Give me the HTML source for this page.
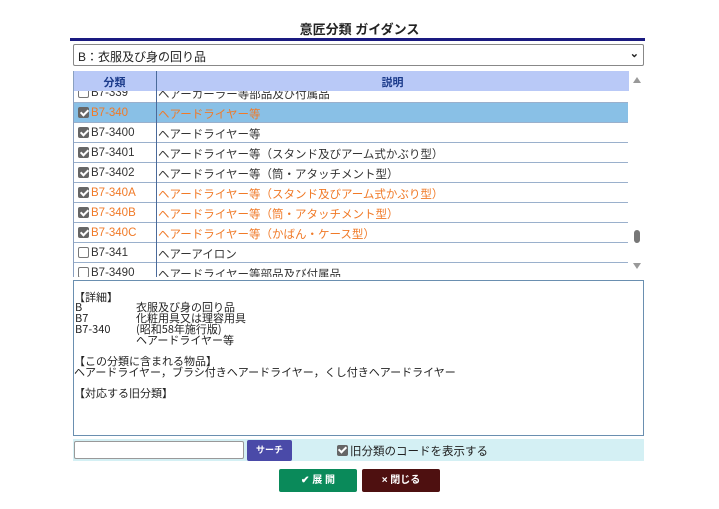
<!DOCTYPE html>
<html><head><meta charset="utf-8"><style>
*{box-sizing:border-box;margin:0;padding:0}
body{width:719px;height:509px;background:#fff;font-family:"Liberation Sans","Noto Sans CJK JP",sans-serif;position:relative;overflow:hidden;color:#333}
.a{position:absolute}
.title{left:0;width:719px;top:19px;text-align:center;font-size:13px;font-weight:bold;color:#222}
.line{left:70px;top:38px;width:575px;height:3px;background:#1a1a80}
.sel{left:73px;top:44px;width:571px;height:22px;border:1px solid #888;border-radius:2px;font-size:12px;padding:3px 4px;color:#222}
.sel span{position:absolute;right:4px;top:2px;font-size:11px;font-weight:bold}
.hdr{left:73px;top:71px;width:556px;height:20px;background:#b9c9f7;font-size:11px;font-weight:bold;color:#1a3a8a}
.hdr div{position:absolute;top:3px;text-align:center}
.vl{left:156px;top:71px;width:1px;height:206px;background:#4a6a9a}
.ll{left:73px;top:71px;width:1px;height:206px;background:#8aa0c0}
.row{position:absolute;left:0;width:554px;height:20px;border-bottom:1px solid #9ab0cc;font-size:11.5px;color:#333}
.row .c{position:absolute;left:4px;top:4px;width:11px;height:11px;border:1px solid #777;border-radius:2px;background:#fff}
.row .c.k{background:#666;border-color:#666}
.c.k:after{content:"";position:absolute;left:3px;top:0px;width:3px;height:6px;border:solid #fff;border-width:0 2px 2px 0;transform:rotate(45deg)}
.row .code{position:absolute;left:17px;top:4px}
.row .d{position:absolute;left:84px;top:3px}
.o{color:#f07a28}
.sb{left:630px;top:71px;width:14px;height:206px;background:#fff}
.ta{left:73px;top:280px;width:571px;height:156px;border:1px solid #6a8fb0;font-size:11px;color:#222;font-family:"Noto Sans CJK JP",sans-serif}
.ta div{position:absolute;white-space:nowrap;line-height:11px}
.bar{left:73px;top:439px;width:571px;height:22px;background:#d4f0f4}
.inp{left:74px;top:441px;width:170px;height:18px;border:1px solid #999;border-radius:2px;background:#fff}
.btn{left:247px;top:440px;width:45px;height:21px;background:#4a4aa8;border-radius:2px;color:#fff;font-size:9px;font-weight:bold;text-align:center;line-height:21px}
.chk{left:337px;top:443px;font-size:11.5px;color:#222}
.chk i{position:relative;display:inline-block;width:11px;height:11px;background:#666;border-radius:2px;vertical-align:-1px;margin-right:2px}
.b1,.b2{top:469px;height:23px;border-radius:2px;color:#fff;font-size:10px;font-weight:bold;text-align:center;line-height:23px}
.b1{left:279px;width:78px;background:#0a8a5a}
.b2{left:362px;width:78px;background:#4e1010}
</style></head><body>
<div class="a title">意匠分類 ガイダンス</div>
<div class="a line"></div>
<div class="a sel">B：衣服及び身の回り品<span>&#x2304;</span></div>
<div class="a" style="left:74px;top:91px;width:554px;height:186px;overflow:hidden">
 <div class="row" style="top:-8px"><i class="c"></i><span class="code">B7-339</span><span class="d">ヘアーカーラー等部品及び付属品</span></div>
 <div class="row o" style="top:12px;background:#89c0e6"><i class="c k"></i><span class="code">B7-340</span><span class="d">ヘアードライヤー等</span></div>
 <div class="row" style="top:32px"><i class="c k"></i><span class="code">B7-3400</span><span class="d">ヘアードライヤー等</span></div>
 <div class="row" style="top:52px"><i class="c k"></i><span class="code">B7-3401</span><span class="d">ヘアードライヤー等（スタンド及びアーム式かぶり型）</span></div>
 <div class="row" style="top:72px"><i class="c k"></i><span class="code">B7-3402</span><span class="d">ヘアードライヤー等（筒・アタッチメント型）</span></div>
 <div class="row o" style="top:92px"><i class="c k"></i><span class="code">B7-340A</span><span class="d">ヘアードライヤー等（スタンド及びアーム式かぶり型）</span></div>
 <div class="row o" style="top:112px"><i class="c k"></i><span class="code">B7-340B</span><span class="d">ヘアードライヤー等（筒・アタッチメント型）</span></div>
 <div class="row o" style="top:132px"><i class="c k"></i><span class="code">B7-340C</span><span class="d">ヘアードライヤー等（かばん・ケース型）</span></div>
 <div class="row" style="top:152px"><i class="c"></i><span class="code">B7-341</span><span class="d">ヘアーアイロン</span></div>
 <div class="row" style="top:172px"><i class="c"></i><span class="code">B7-3490</span><span class="d">ヘアードライヤー等部品及び付属品</span></div>
</div>
<div class="a hdr"><div style="left:0;width:83px">分類</div><div style="left:83px;width:473px">説明</div></div>
<div class="a ll"></div><div class="a vl"></div>
<div class="a sb"><div class="a" style="left:3px;top:6px;width:0;height:0;border-left:4px solid transparent;border-right:4px solid transparent;border-bottom:6px solid #999"></div>
<div class="a" style="left:4px;top:159px;width:6px;height:13px;background:#777;border-radius:3px"></div>
<div class="a" style="left:3px;top:192px;width:0;height:0;border-left:4px solid transparent;border-right:4px solid transparent;border-top:6px solid #999"></div></div>
<div class="a ta">
<div style="left:0;top:11px">【詳細】</div>
<div style="left:1px;top:21px">B</div><div style="left:62px;top:21px">衣服及び身の回り品</div>
<div style="left:1px;top:32px">B7</div><div style="left:62px;top:32px">化粧用具又は理容用具</div>
<div style="left:1px;top:43px">B7-340</div><div style="left:62px;top:43px">(昭和58年施行版)</div>
<div style="left:62px;top:54px">ヘアードライヤー等</div>
<div style="left:0;top:75px">【この分類に含まれる物品】</div>
<div style="left:0;top:86px">ヘアードライヤー，ブラシ付きヘアードライヤー，くし付きヘアードライヤー</div>
<div style="left:0;top:107px">【対応する旧分類】</div>
</div>
<div class="a bar"></div>
<div class="a inp"></div>
<div class="a btn">サーチ</div>
<div class="a chk"><i class="c k"></i>旧分類のコードを表示する</div>
<div class="a b1">✔ 展 開</div>
<div class="a b2">× 閉じる</div>
</body></html>
